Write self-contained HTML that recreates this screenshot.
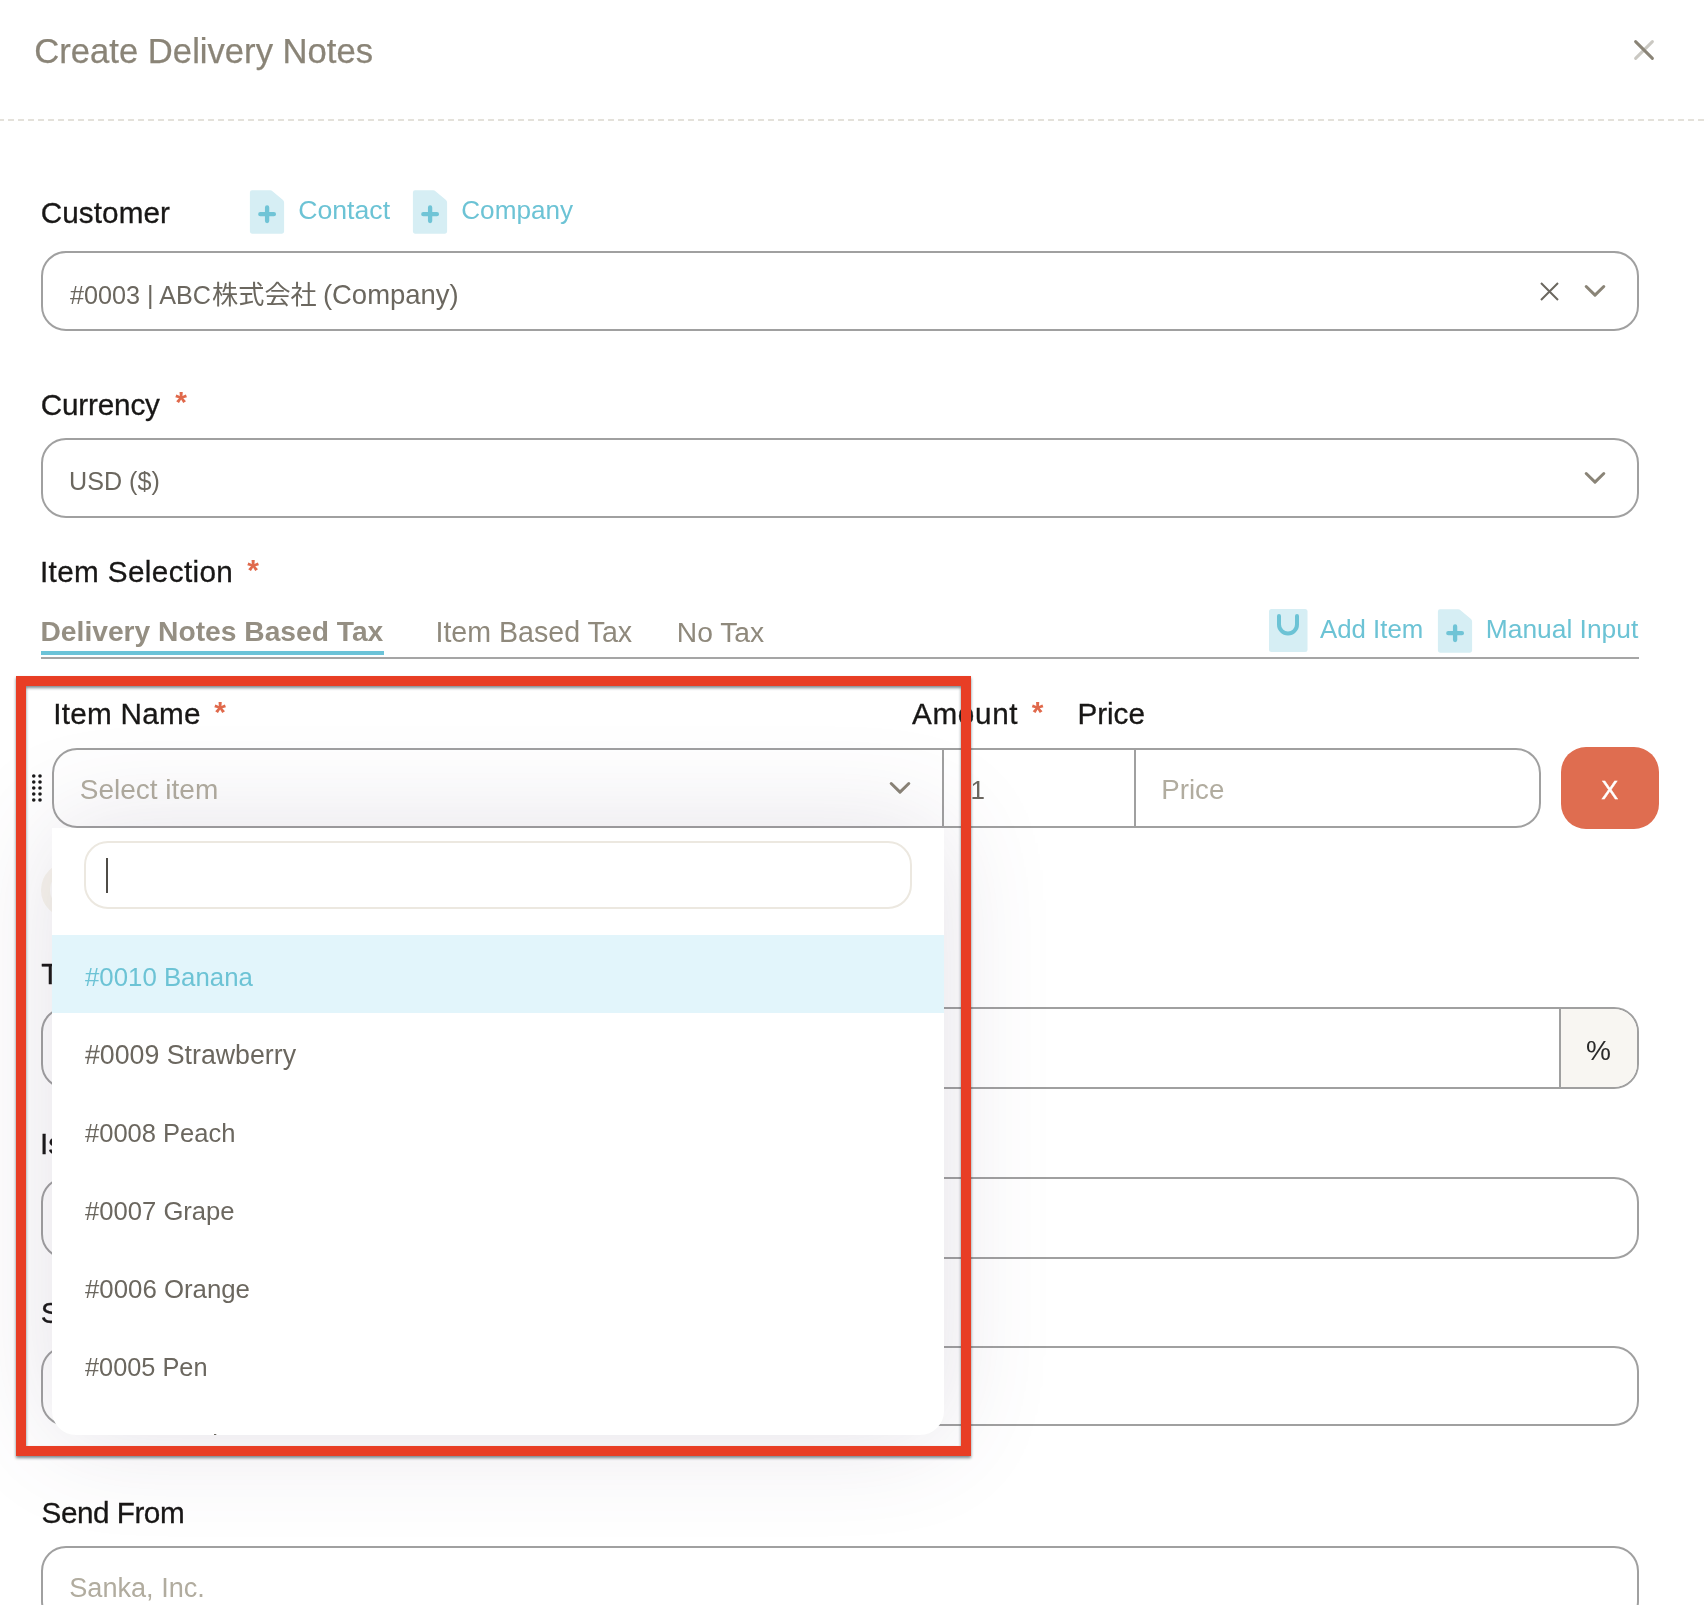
<!DOCTYPE html>
<html lang="en">
<head>
<meta charset="utf-8">
<title>Create Delivery Notes</title>
<style>
  html, body { margin: 0; padding: 0; }
  html { overflow: hidden; }
  body {
    width: 1704px; height: 1605px; overflow: hidden; position: relative;
    background: #ffffff;
    font-family: "Liberation Sans", "Noto Sans CJK JP", sans-serif;
    color: #6b675f;
  }
  .page { position: absolute; left: 0; top: 0; width: 1704px; height: 1605px; overflow: hidden; will-change: transform; }
  ul, li { margin: 0; padding: 0; list-style: none; }
  .abs { position: absolute; }
  .t { position: absolute; white-space: pre; line-height: 1; margin: 0; padding: 0; font-weight: 400; display: block; }
  .cjk { font-family: "Noto Sans CJK JP", "Liberation Sans", sans-serif; }

  /* text styles */
  .title { color: #8a8477; -webkit-text-stroke: 0.25px #8a8477; }
  .label { color: #181716; -webkit-text-stroke: 0.3px #181716; }
  .req { color: #e0694b; font-weight: 700; }
  .link { color: #6cc3d5; }
  .val { color: #6b675f; }
  .ph { color: #b1ac9f; }
  .tab { color: #8f897c; }
  .tab.active { font-weight: 700; color: #958f83; }
  .xbtn { color: #ffffff; z-index: 2; -webkit-text-stroke: 0.4px #ffffff; }
  .pct { color: #2a2a2a; }

  /* boxes */
  .field {
    position: absolute; box-sizing: border-box;
    border: 2px solid #a0a0a0; border-radius: 25px; background: #fff;
  }
  .vline { position: absolute; width: 2px; background: #a0a0a0; }
  .addon { position: absolute; right: 0; top: 0; bottom: 0; width: 76px; background: #f8f6f2; border-radius: 0 23px 23px 0; }

  /* header */
  .dash {
    position: absolute; left: 0; top: 119px; width: 1704px; height: 2px;
    background: repeating-linear-gradient(90deg, #e4e1da 0 6px, rgba(255,255,255,0) 6px 10px) -2px 0;
  }
  .tabline { position: absolute; left: 41px; top: 657px; width: 1598px; height: 2px; background: #a5a5a5; }
  .tabactive { position: absolute; left: 41px; top: 651px; width: 343px; height: 4px; background: #6cc3d8; }

  .delbtn { position: absolute; left: 1561px; top: 747px; width: 98px; height: 82px; border-radius: 25px; background: #df6d50; }
  .ring { position: absolute; left: 41px; top: 862px; width: 56px; height: 56px; box-sizing: border-box; border: 9px solid #f8f5ed; border-radius: 50%; background: #fdfcfb; }

  /* dropdown */
  .dropdown {
    position: absolute; left: 52px; top: 828px; width: 892px; height: 607px;
    background: #fff; border-radius: 0 0 24px 24px;
    box-shadow: 0 0 108px 0 rgba(82,63,105,0.155);
    z-index: 5;
  }
  .dropdown .clip { position: absolute; left: 0; top: 0; right: 0; bottom: 0; overflow: hidden; border-radius: 0 0 24px 24px; }
  .search {
    position: absolute; left: 32px; top: 13px; width: 828px; height: 68px; box-sizing: border-box;
    border: 2px solid #ece8e0; border-radius: 24px; background: #fff;
  }
  .caret { position: absolute; left: 54px; top: 30px; width: 2px; height: 35px; background: #4f4c47; }
  .opt { position: absolute; left: 0; width: 892px; height: 78px; }
  .opt.hl { background: #e2f5fb; }

  /* annotation */
  .redbox {
    position: absolute; left: 16px; top: 676px; width: 955px; height: 780px; box-sizing: border-box;
    border: 10px solid #e83e25; z-index: 10;
    filter: drop-shadow(0.5px 2.2px 1.5px rgba(45,65,75,0.62));
  }

</style>
</head>
<body>
<div class="page">

<!-- ===== Modal header ===== -->
<header>
  <h2 class="t title" style="left:34.25px;top:34px;font-size:34.65px;">Create Delivery Notes</h2>
  <svg class="abs" style="left:1630px;top:36px" width="28" height="28" viewBox="0 0 28 28" fill="none" stroke-linecap="round">
    <line x1="5.6" y1="22.4" x2="22.4" y2="5.6" stroke="#8a8477" stroke-opacity="0.45" stroke-width="3"/>
    <line x1="5.6" y1="5.6" x2="22.4" y2="22.4" stroke="#8a8477" stroke-width="3"/>
  </svg>
  <div class="dash"></div>
</header>

<main>
<!-- ===== Customer ===== -->
<section>
  <label class="t label" style="left:40.75px;top:198px;font-size:29.7px;letter-spacing:0.071px;">Customer</label>
  <svg class="abs" style="left:249px;top:190px" width="36" height="44" viewBox="0 0 36 44">
    <path d="M3 0.3 H21 Q22.6 0.3 23.8 1.4 L34 10 Q35.1 11 35.1 12.5 V41.6 Q35.1 43.7 33 43.7 H3 Q0.9 43.7 0.9 41.6 V2.4 Q0.9 0.3 3 0.3 Z" fill="#d6eef4"/>
    <path d="M18.1 17.4 V31 M11.3 24.2 H24.9" stroke="#70c4d6" stroke-width="4.3" stroke-linecap="round" fill="none"/>
  </svg>
  <div class="t link" style="left:298.25px;top:197px;font-size:26.65px;">Contact</div>
  <svg class="abs" style="left:412px;top:190px" width="36" height="44" viewBox="0 0 36 44">
    <path d="M3 0.3 H21 Q22.6 0.3 23.8 1.4 L34 10 Q35.1 11 35.1 12.5 V41.6 Q35.1 43.7 33 43.7 H3 Q0.9 43.7 0.9 41.6 V2.4 Q0.9 0.3 3 0.3 Z" fill="#d6eef4"/>
    <path d="M18.1 17.4 V31 M11.3 24.2 H24.9" stroke="#70c4d6" stroke-width="4.3" stroke-linecap="round" fill="none"/>
  </svg>
  <div class="t link" style="left:461.25px;top:197px;font-size:26.14px;">Company</div>
  <div class="field" style="left:41px;top:251px;width:1598px;height:80px">
    <svg class="abs" style="left:1494.5px;top:26.5px" width="24" height="24" viewBox="0 0 24 24" fill="none" stroke="#6b675f" stroke-width="2" stroke-linecap="butt">
      <path d="M3 3 L20 20 M20 3 L3 20"/>
    </svg>
    <svg class="abs" style="left:1539px;top:29px" width="26" height="18" viewBox="0 0 26 18" fill="none" stroke="#8a8477" stroke-width="3" stroke-linecap="round" stroke-linejoin="round">
      <path d="M4.2 4.5 L13 13.1 L21.8 4.5"/>
    </svg>
  </div>
  <div class="value"><div class="t val" style="left:70.00px;top:283px;font-size:25.2px;">#0003 | ABC</div><div class="t val cjk" style="left:212.10px;top:280px;font-size:26.15px;">株式会社</div><div class="t val" style="left:315.25px;top:281px;font-size:27.48px;"> (Company)</div></div>
</section>

<!-- ===== Currency ===== -->
<section>
  <label class="t label" style="left:40.75px;top:390px;font-size:29.7px;letter-spacing:-0.179px;">Currency</label><span class="t req" style="left:175.25px;top:387px;font-size:30px;">*</span>
  <div class="field" style="left:41px;top:438px;width:1598px;height:80px">
    <svg class="abs" style="left:1539px;top:29px" width="26" height="18" viewBox="0 0 26 18" fill="none" stroke="#8a8477" stroke-width="3" stroke-linecap="round" stroke-linejoin="round">
      <path d="M4.2 4.5 L13 13.1 L21.8 4.5"/>
    </svg>
  </div>
  <div class="t val" style="left:69.10px;top:469px;font-size:25.12px;">USD ($)</div>
</section>

<!-- ===== Item selection ===== -->
<section>
  <label class="t label" style="left:40.00px;top:557px;font-size:29.7px;letter-spacing:0.365px;">Item Selection</label><span class="t req" style="left:247.25px;top:555px;font-size:30px;">*</span>
  <nav>
    <div class="t tab active" style="left:40.50px;top:617px;font-size:28.21px;">Delivery Notes Based Tax</div><div class="t tab" style="left:435.45px;top:618px;font-size:28.62px;">Item Based Tax</div><div class="t tab" style="left:676.75px;top:618px;font-size:28.23px;">No Tax</div>
    <div class="tabline"></div><div class="tabactive"></div>
  </nav>
  <svg class="abs" style="left:1268px;top:608px" width="41" height="45" viewBox="0 0 41 45">
    <rect x="1" y="1" width="38.5" height="43" rx="2.5" fill="#d6eef4"/>
    <path d="M11 8 V16.5 A9 9 0 0 0 29 16.5 V8" fill="none" stroke="#6cc3d5" stroke-width="4" stroke-linecap="round"/>
  </svg>
  <div class="t link" style="left:1320.00px;top:617px;font-size:25.8px;">Add Item</div>
  <svg class="abs" style="left:1436.9px;top:608.7px" width="36" height="44" viewBox="0 0 36 44">
    <path d="M3 0.3 H21 Q22.6 0.3 23.8 1.4 L34 10 Q35.1 11 35.1 12.5 V41.6 Q35.1 43.7 33 43.7 H3 Q0.9 43.7 0.9 41.6 V2.4 Q0.9 0.3 3 0.3 Z" fill="#d6eef4"/>
    <path d="M18.1 17.4 V31 M11.3 24.2 H24.9" stroke="#70c4d6" stroke-width="4.3" stroke-linecap="round" fill="none"/>
  </svg>
  <div class="t link" style="left:1485.75px;top:616px;font-size:26.38px;">Manual Input</div>

  <!-- item row -->
  <label class="t label" style="left:53.30px;top:699px;font-size:29.7px;letter-spacing:0.25px;">Item Name</label><span class="t req" style="left:214.25px;top:697px;font-size:30px;">*</span><label class="t label" style="left:912.00px;top:699px;font-size:29.7px;letter-spacing:0.65px;">Amount</label><span class="t req" style="left:1031.75px;top:697px;font-size:30px;">*</span><label class="t label" style="left:1077.50px;top:699px;font-size:29.7px;letter-spacing:-0.062px;">Price</label>
  <svg class="abs" style="left:30px;top:772px" width="14" height="32" viewBox="0 0 14 32" fill="#1a1a1a">
    <circle cx="3.75" cy="4" r="1.8"/><circle cx="10" cy="4" r="1.8"/>
    <circle cx="3.75" cy="10" r="1.8"/><circle cx="10" cy="10" r="1.8"/>
    <circle cx="3.75" cy="16" r="1.8"/><circle cx="10" cy="16" r="1.8"/>
    <circle cx="3.75" cy="22" r="1.8"/><circle cx="10" cy="22" r="1.8"/>
    <circle cx="3.75" cy="28" r="1.8"/><circle cx="10" cy="28" r="1.8"/>
  </svg>
  <div class="field" style="left:52px;top:748px;width:1489px;height:80px">
    <div class="vline" style="left:888px;top:0;height:76px"></div>
    <div class="vline" style="left:1080px;top:0;height:76px"></div>
    <svg class="abs" style="left:833px;top:29px" width="26" height="18" viewBox="0 0 26 18" fill="none" stroke="#8a8477" stroke-width="3" stroke-linecap="round" stroke-linejoin="round">
      <path d="M4.2 4.5 L13 13.1 L21.8 4.5"/>
    </svg>
  </div>
  <div class="t ph" style="left:79.75px;top:776px;font-size:28.0px;">Select item</div><div class="t val" style="left:970.50px;top:777px;font-size:26px;">1</div><div class="t ph" style="left:1161.25px;top:776px;font-size:27.7px;">Price</div>
  <div class="delbtn"></div><span class="t xbtn" style="left:1601.25px;top:778px;font-size:25.5px;">X</span>
  <div class="ring"></div>
</section>

<!-- ===== Fields hidden behind the dropdown ===== -->
<section>
  <label class="t label" style="left:41.20px;top:959px;font-size:29.7px;">Tax Rate</label>
  <div class="field" style="left:41px;top:1007px;width:1598px;height:82px">
    <div class="addon"></div>
    <div class="vline" style="left:1516px;top:0;height:78px"></div>
  </div>
  <span class="t pct" style="left:1586.00px;top:1037px;font-size:28px;">%</span>
  <label class="t label" style="left:40.00px;top:1129px;font-size:29.7px;">Issue Date</label>
  <div class="field" style="left:41px;top:1177px;width:1598px;height:82px"></div>
  <label class="t label" style="left:40.75px;top:1298px;font-size:29.7px;">Start Date</label>
  <div class="field" style="left:41px;top:1346px;width:1598px;height:80px"></div>
  <label class="t label" style="left:41.55px;top:1498px;font-size:29.7px;letter-spacing:-0.469px;">Send From</label>
  <div class="field" style="left:41px;top:1546px;width:1598px;height:80px"></div>
  <div class="t ph" style="left:69.25px;top:1574px;font-size:27.11px;">Sanka, Inc.</div>
</section>

<!-- ===== Open select dropdown ===== -->
<div class="dropdown">
  <div class="clip">
    <div class="search"><div class="caret" style="left:20px;top:15px"></div></div>
    <ul>
    <li class="opt hl" style="top:107px"><span class="t link" style="left:33.00px;top:30px;font-size:25.81px;">#0010 Banana</span></li>
    <li class="opt" style="top:185px"><span class="t val" style="left:33.00px;top:29px;font-size:26.74px;">#0009 Strawberry</span></li>
    <li class="opt" style="top:263px"><span class="t val" style="left:33.00px;top:30px;font-size:25.54px;">#0008 Peach</span></li>
    <li class="opt" style="top:341px"><span class="t val" style="left:33.00px;top:30px;font-size:25.63px;">#0007 Grape</span></li>
    <li class="opt" style="top:419px"><span class="t val" style="left:33.00px;top:30px;font-size:25.81px;">#0006 Orange</span></li>
    <li class="opt" style="top:497px"><span class="t val" style="left:33.00px;top:30px;font-size:25.34px;">#0005 Pen</span></li>
    <li class="opt" style="top:575px"><span class="t val" style="left:33.00px;top:29px;font-size:25.74px;letter-spacing:-0.45px;">#0004 Stapler</span></li>
    </ul>
  </div>
</div>
</main>

<!-- ===== Red annotation rectangle ===== -->
<div class="redbox"></div>
</div>

</body>
</html>
